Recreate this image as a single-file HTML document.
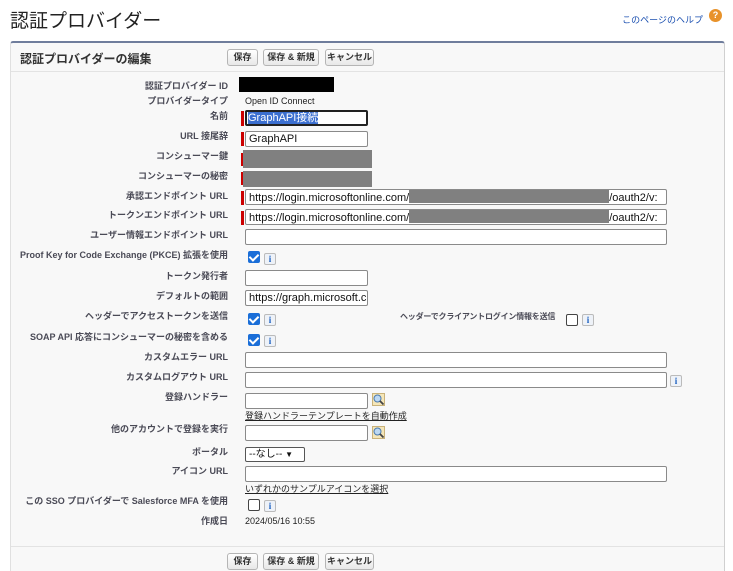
<!DOCTYPE html>
<html><head><meta charset="utf-8"><style>
*{margin:0;padding:0;box-sizing:border-box}
body{width:733px;height:571px;background:#fff;position:relative;overflow:hidden;font-family:"Liberation Sans","Noto Sans CJK JP",sans-serif;color:#222}
.a{position:absolute}
.lb{position:absolute;right:505px;font-size:9px;font-weight:bold;color:#4a4a56;white-space:nowrap;line-height:11px}
.in{position:absolute;background:#fff;border:1px solid #8a8a8a;border-radius:2px;height:16px;font-size:11px;line-height:14px;padding-left:3px;white-space:nowrap;overflow:hidden;color:#111}
.req{position:absolute;left:241px;width:3px;background:#c00}
.cb{position:absolute;width:12px;height:12px;border-radius:2px}
.on{background:#1a6ed8}
.on:after{content:"";position:absolute;left:3px;top:1px;width:4px;height:7px;border:solid #fff;border-width:0 2px 2px 0;transform:rotate(45deg)}
.off{border:1px solid #444;background:#fff}
.i{position:absolute;width:12px;height:12px;border:1px solid #bbb;border-radius:2px;background:#eef2f8;color:#1a5fc0;font:bold 9px "Liberation Serif",serif;text-align:center;line-height:11px}
.btn{position:absolute;height:17px;border:1px solid #b5b5b5;border-radius:3px;background:linear-gradient(#fff,#e8e8e8);font-size:9px;font-weight:bold;color:#333;text-align:center;line-height:15px}
.gray{position:absolute;background:#808080}
.lnk{position:absolute;font-size:9px;color:#222;text-decoration:underline;white-space:nowrap}
.mg{position:absolute;width:13px;height:13px}
</style></head><body>
<div class="a" style="left:10px;top:6px;font-size:19px;color:#222">認証プロバイダー</div>
<div class="a" style="right:30px;top:13px;font-size:9px;color:#1a4fb0;white-space:nowrap">このページのヘルプ</div>
<div class="a" style="left:709px;top:9px;width:13px;height:13px;border-radius:50%;background:#e8922a;color:#fff;font-size:9px;font-weight:bold;text-align:center;line-height:13px">?</div>
<div class="a" style="left:10px;top:41px;width:715px;height:530px;background:#f8f8f8;border-top:2px solid #6f7d9c;border-left:1px solid #e0e0e0;border-right:1px solid #d0d0d0;border-radius:3px 3px 0 0"></div>
<div class="a" style="left:11px;top:71px;width:713px;height:1px;background:#e3e3e3"></div>
<div class="a" style="left:11px;top:546px;width:713px;height:1px;background:#e3e3e3"></div>
<div class="a" style="left:20px;top:50px;font-size:12px;font-weight:bold;color:#333">認証プロバイダーの編集</div>
<div class="btn" style="left:227px;top:49px;width:31px">保存</div>
<div class="btn" style="left:263px;top:49px;width:56px">保存 &amp; 新規</div>
<div class="btn" style="left:325px;top:49px;width:49px">キャンセル</div>
<div class="btn" style="left:227px;top:553px;width:31px">保存</div>
<div class="btn" style="left:263px;top:553px;width:56px">保存 &amp; 新規</div>
<div class="btn" style="left:325px;top:553px;width:49px">キャンセル</div>

<div class="lb" style="top:81px">認証プロバイダー ID</div>
<div class="a" style="left:239px;top:77px;width:95px;height:15px;background:#000"></div>
<div class="lb" style="top:96px">プロバイダータイプ</div>
<div class="a" style="left:245px;top:96px;font-size:9px">Open ID Connect</div>
<div class="lb" style="top:111px">名前</div>
<div class="req" style="top:111px;height:15px"></div>
<div class="in" style="left:245px;top:110px;width:123px;border:2px solid #222;line-height:12px;padding-left:1px"><span style="background:#3b6fd0;color:#fff">GraphAPI接続</span></div>
<div class="lb" style="top:131px">URL 接尾辞</div>
<div class="req" style="top:132px;height:14px"></div>
<div class="in" style="left:245px;top:131px;width:123px">GraphAPI</div>
<div class="lb" style="top:151px">コンシューマー鍵</div>
<div class="req" style="top:153px;height:13px"></div>
<div class="gray" style="left:243px;top:150px;width:129px;height:18px"></div>
<div class="lb" style="top:171px">コンシューマーの秘密</div>
<div class="req" style="top:172px;height:13px"></div>
<div class="gray" style="left:243px;top:171px;width:129px;height:16px"></div>
<div class="lb" style="top:191px">承認エンドポイント URL</div>
<div class="req" style="top:191px;height:14px"></div>
<div class="in" style="left:245px;top:189px;width:422px">https://login.microsoftonline.com/<span style="display:inline-block;width:200px;height:13px;background:#808080;vertical-align:-2px"></span>/oauth2/v:</div>
<div class="lb" style="top:210px">トークンエンドポイント URL</div>
<div class="req" style="top:211px;height:14px"></div>
<div class="in" style="left:245px;top:209px;width:422px">https://login.microsoftonline.com/<span style="display:inline-block;width:200px;height:13px;background:#808080;vertical-align:-2px"></span>/oauth2/v:</div>
<div class="lb" style="top:230px">ユーザー情報エンドポイント URL</div>
<div class="in" style="left:245px;top:229px;width:422px"></div>
<div class="lb" style="top:250px">Proof Key for Code Exchange (PKCE) 拡張を使用</div>
<div class="cb on" style="left:248px;top:251px"></div><div class="i" style="left:264px;top:253px">i</div>
<div class="lb" style="top:271px">トークン発行者</div>
<div class="in" style="left:245px;top:270px;width:123px"></div>
<div class="lb" style="top:291px">デフォルトの範囲</div>
<div class="in" style="left:245px;top:290px;width:123px">https://graph.microsoft.c</div>
<div class="lb" style="top:311px">ヘッダーでアクセストークンを送信</div>
<div class="cb on" style="left:248px;top:313px"></div><div class="i" style="left:264px;top:314px">i</div>
<div class="a" style="left:400px;top:311px;font-size:8px;font-weight:bold;color:#4a4a56;white-space:nowrap;letter-spacing:-0.2px">ヘッダーでクライアントログイン情報を送信</div>
<div class="cb off" style="left:566px;top:314px"></div><div class="i" style="left:582px;top:314px">i</div>
<div class="lb" style="top:332px">SOAP API 応答にコンシューマーの秘密を含める</div>
<div class="cb on" style="left:248px;top:334px"></div><div class="i" style="left:264px;top:335px">i</div>
<div class="lb" style="top:352px">カスタムエラー URL</div>
<div class="in" style="left:245px;top:352px;width:422px"></div>
<div class="lb" style="top:372px">カスタムログアウト URL</div>
<div class="in" style="left:245px;top:372px;width:422px"></div><div class="i" style="left:670px;top:375px">i</div>
<div class="lb" style="top:392px">登録ハンドラー</div>
<div class="in" style="left:245px;top:393px;width:123px"></div>
<svg class="mg" style="left:372px;top:393px" viewBox="0 0 13 13"><rect x="0.5" y="0.5" width="12" height="12" fill="#f5e6b8" stroke="#c9b27a"/><circle cx="5.5" cy="5.5" r="3.5" fill="#bcd8f2" stroke="#4a7ab0"/><line x1="8" y1="8" x2="11.5" y2="11.5" stroke="#444" stroke-width="1.8"/></svg>
<div class="lnk" style="left:245px;top:409px">登録ハンドラーテンプレートを自動作成</div>
<div class="lb" style="top:424px">他のアカウントで登録を実行</div>
<div class="in" style="left:245px;top:425px;width:123px"></div>
<svg class="mg" style="left:372px;top:426px" viewBox="0 0 13 13"><rect x="0.5" y="0.5" width="12" height="12" fill="#f5e6b8" stroke="#c9b27a"/><circle cx="5.5" cy="5.5" r="3.5" fill="#bcd8f2" stroke="#4a7ab0"/><line x1="8" y1="8" x2="11.5" y2="11.5" stroke="#444" stroke-width="1.8"/></svg>
<div class="lb" style="top:447px">ポータル</div>
<div class="in" style="left:245px;top:447px;width:60px;height:15px;border-color:#555;font-size:10px;line-height:13px">--なし-- <span style="font-size:8px">&#9660;</span></div>
<div class="lb" style="top:466px">アイコン URL</div>
<div class="in" style="left:245px;top:466px;width:422px"></div>
<div class="lnk" style="left:245px;top:482px">いずれかのサンプルアイコンを選択</div>
<div class="lb" style="top:496px">この SSO プロバイダーで Salesforce MFA を使用</div>
<div class="cb off" style="left:248px;top:499px"></div><div class="i" style="left:264px;top:500px">i</div>
<div class="lb" style="top:516px">作成日</div>
<div class="a" style="left:245px;top:516px;font-size:9px">2024/05/16 10:55</div>
</body></html>
